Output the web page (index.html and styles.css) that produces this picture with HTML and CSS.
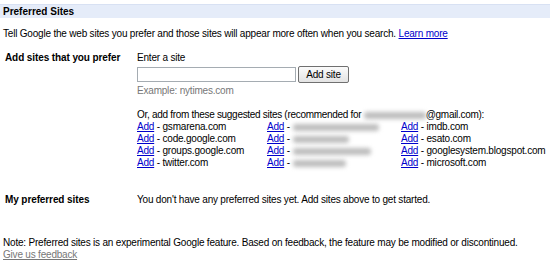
FILE: index.html
```html
<!DOCTYPE html>
<html>
<head>
<meta charset="utf-8">
<link rel="stylesheet" href="styles.css">
</head>
<body>
<div class="header">Preferred Sites</div>
<p class="intro">Tell Google the web sites you prefer and those sites will appear more often when you search. <a href="#">Learn more</a></p>

<div class="row add-row">
  <div class="label">Add sites that you prefer</div>
  <div class="content">
    <div class="enter">Enter a site</div>
    <div class="form">
      <input class="site-input" type="text">
      <button class="add-btn">Add site</button>
    </div>
    <div class="example">Example: nytimes.com</div>
    <div class="suggest-head">Or, add from these suggested sites (recommended for <span class="blur email"></span>@gmail.com):</div>
    <div class="suggest">
      <div class="col c1">
        <div><a href="#">Add</a> - gsmarena.com</div>
        <div><a href="#">Add</a> - code.google.com</div>
        <div><a href="#">Add</a> - groups.google.com</div>
        <div><a href="#">Add</a> - twitter.com</div>
      </div>
      <div class="col c2">
        <div><a href="#">Add</a> - <span class="blur" style="width:86px"></span></div>
        <div><a href="#">Add</a> - <span class="blur" style="width:56px"></span></div>
        <div><a href="#">Add</a> - <span class="blur" style="width:78px"></span></div>
        <div><a href="#">Add</a> - <span class="blur" style="width:53px"></span></div>
      </div>
      <div class="col c3">
        <div><a href="#">Add</a> - imdb.com</div>
        <div><a href="#">Add</a> - esato.com</div>
        <div><a href="#">Add</a> - googlesystem.blogspot.com</div>
        <div><a href="#">Add</a> - microsoft.com</div>
      </div>
    </div>
  </div>
</div>

<div class="row mine-row">
  <div class="label">My preferred sites</div>
  <div class="content">You don't have any preferred sites yet. Add sites above to get started.</div>
</div>

<div class="note">Note: Preferred sites is an experimental Google feature. Based on feedback, the feature may be modified or discontinued.<br><a class="feedback" href="#">Give us feedback</a></div>
</body>
</html>
```
FILE: styles.css
```css
html, body {
  margin: 0;
  padding: 0;
  background: #fff;
}
body {
  font-family: "Liberation Sans", Arial, sans-serif;
  font-size: 10px;
  letter-spacing: -0.2px;
  line-height: 12px;
  color: #000;
}
a {
  color: #0000cc;
  text-decoration: underline;
}
.header {
  margin-top: 4px;
  height: 14px;
  line-height: 14px;
  background: #e5ecf9;
  border-top: 1px solid #d8e1f3;
  box-sizing: border-box;
  font-weight: bold;
  letter-spacing: 0;
  padding-left: 3px;
}
.intro {
  margin: 0;
  padding: 10px 0 0 3px;
  height: 12px;
}
.row {
  display: flex;
}
.label {
  width: 132px;
  padding-left: 5px;
  font-weight: bold;
  letter-spacing: -0.1px;
  flex: none;
}
.add-row {
  margin-top: 12px;
}
.content {
  flex: 1;
}
.enter {
  height: 12px;
}
.form {
  display: flex;
  align-items: center;
  margin-top: 1px;
  height: 18px;
}
.site-input {
  box-sizing: border-box;
  width: 159px;
  height: 15px;
  margin: 0;
  border: 1px solid #a5acb2;
  padding: 0;
}
.add-btn {
  box-sizing: border-box;
  margin: 0 0 0 2px;
  width: 51px;
  height: 17px;
  padding: 0;
  font-family: "Liberation Sans", Arial, sans-serif;
  font-size: 10px;
  letter-spacing: -0.2px;
  color: #000;
  background: linear-gradient(#fbfbfb, #e3e3e3);
  border: 1px solid #707070;
  border-radius: 2px;
}
.example {
  color: #777;
  margin-top: 2px;
}
.suggest-head {
  margin-top: 12px;
  letter-spacing: -0.3px;
}
.blur {
  display: inline-block;
  height: 7px;
  vertical-align: -1px;
  background: #bdbdbd;
  filter: blur(2px);
  border-radius: 3px;
}
.email {
  width: 62px;
}
.suggest {
  display: flex;
}
.col {
  flex: none;
}
.c1 { width: 130px; }
.c2 { width: 134px; }
.mine-row {
  margin-top: 25px;
}
.note {
  margin-top: 31px;
  padding-left: 3px;
}
.feedback {
  color: #777;
}
```
